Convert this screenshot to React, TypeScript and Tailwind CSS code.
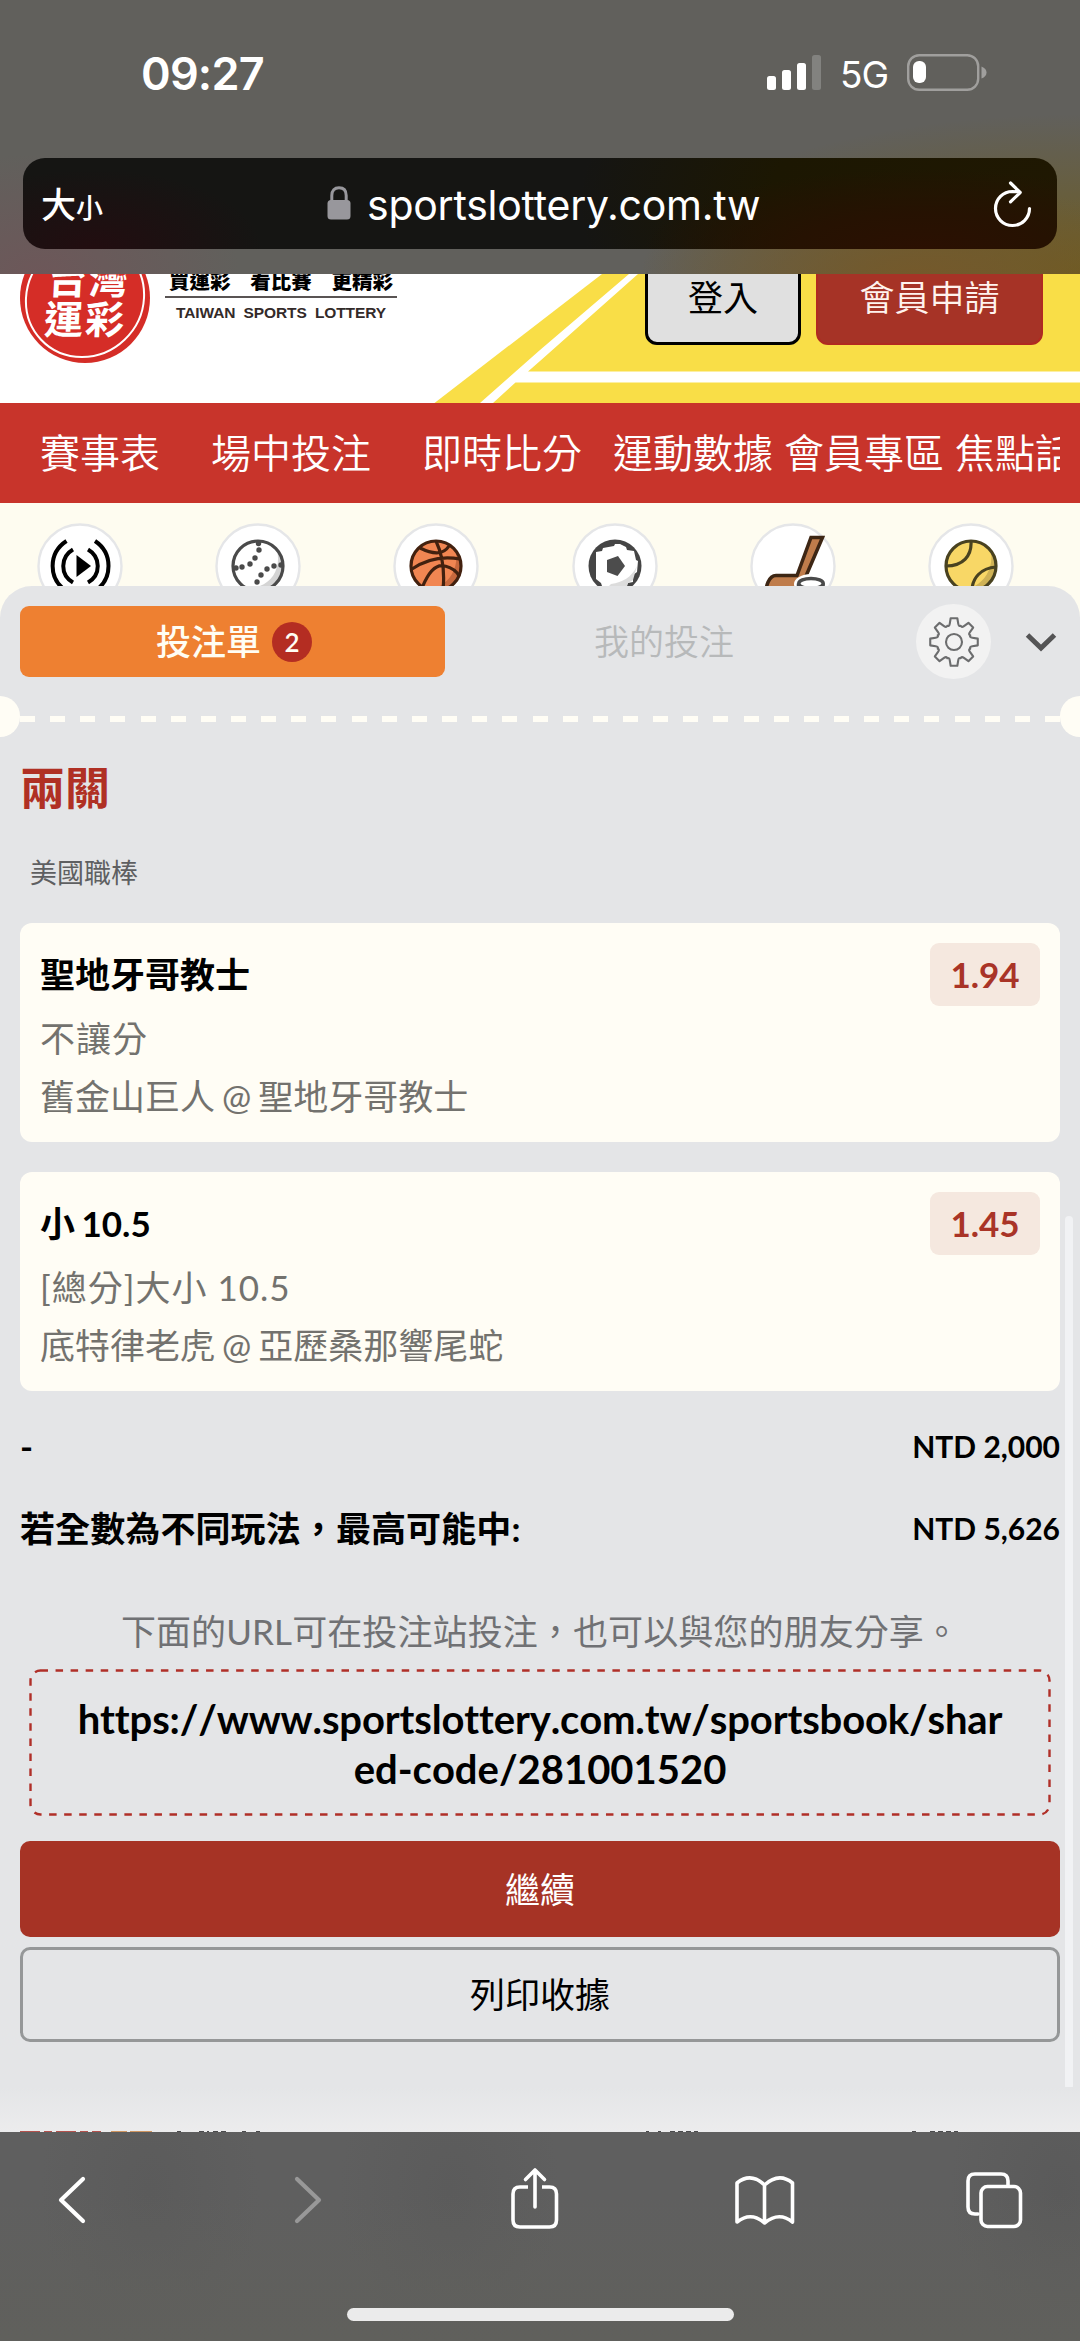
import React from 'react';

interface Bet {
  pick: string;
  odds: string;
  market: string;
  match: string;
}

const bets: Bet[] = [
  { pick: '聖地牙哥教士', odds: '1.94', market: '不讓分', match: '舊金山巨人 @ 聖地牙哥教士' },
  { pick: '小 10.5', odds: '1.45', market: '[總分]大小 10.5', match: '底特律老虎 @ 亞歷桑那響尾蛇' },
];

const StatusBar = () => (
  <div className="flex h-[158px] items-start pt-[40px] font-['Inter',sans-serif] text-white">
    <span className="ml-[141px] text-[45px] leading-[67px] font-semibold tracking-[-0.8px]">09:27</span>
    <svg className="mt-[15px] ml-auto" width="54" height="35" viewBox="0 0 54 35" fill="white">
      <rect x="0" y="21" width="9" height="14" rx="2.5" />
      <rect x="15" y="15" width="9" height="20" rx="2.5" />
      <rect x="30" y="8" width="9" height="27" rx="2.5" />
      <rect x="45" y="0" width="9" height="35" rx="2.5" fill="#82827f" />
    </svg>
    <span className="ml-[19px] w-[49px] text-[37px] leading-[70px] tracking-[-1px]">5G</span>
    <svg className="mt-[14px] mr-[93px] ml-[18px]" width="80" height="38" viewBox="0 0 80 38">
      <rect x="1.2" y="1.2" width="70" height="34.6" rx="11" fill="none" stroke="#a09f9d" strokeWidth="2.4" />
      <rect x="6" y="7" width="13" height="22" rx="6" fill="white" />
      <path d="M74.5 12.5q5 2 5 6t-5 6z" fill="#a09f9d" />
    </svg>
  </div>
);

const AddressBar = () => (
  <div className="mx-[23px] flex h-[91px] items-center rounded-[22px] bg-[#151513] bg-[radial-gradient(ellipse_280px_80px_at_900px_100%,#2b1002_0%,#261202_45%,transparent_100%),radial-gradient(ellipse_480px_220px_at_100%_50%,#201802_0%,#1c1702_60%,transparent_100%),radial-gradient(ellipse_170px_80px_at_70px_100%,#220d10_0%,transparent_100%)] pl-[18px] text-white">
    <span className="w-[283px] font-['Noto_Sans_CJK_TC',sans-serif] font-medium">
      <span className="text-[35px]">大</span>
      <span className="text-[27px]">小</span>
    </span>
    <svg width="24" height="34" viewBox="0 0 24 34" className="mb-[1px] ml-[3px]">
      <path d="M4.8 16V9.5C4.8 4.5 7.5 1.8 12 1.8S19.2 4.5 19.2 9.5V16" fill="none" stroke="#98979c" strokeWidth="3" />
      <rect x="0.5" y="14" width="23" height="19.5" rx="3.5" fill="#98979c" />
    </svg>
    <span className="mt-[2px] ml-[16px] font-['Inter',sans-serif] text-[41px] leading-[60px] tracking-[-0.25px]">sportslottery.com.tw</span>
    <svg className="mr-[25px] ml-auto" width="40" height="48" viewBox="0 0 40 48" fill="none" stroke="white" strokeWidth="3.2" strokeLinecap="round" strokeLinejoin="round">
      <path d="M37.5 28.5A17 17 0 1 1 20.5 11.5L27.5 11.8M18.5 3L28.2 12.5L18.5 21.8" />
    </svg>
  </div>
);

const SiteHeader = () => (
  <div className="relative h-[129px] overflow-hidden bg-white">
    <svg className="absolute inset-0" width="1080" height="129" viewBox="0 0 1080 129">
      <path d="M602 0H1080V129H434.5Z" fill="#f9de47" />
      <path d="M629 0H638L540 87L528 97.5H1080V108.5H515.5L493 129H480L540 76Z" fill="white" />
    </svg>
    <div className="relative flex">
      <div className="-mt-[41px] ml-[20px] h-[130px] w-[130px] shrink-0 rounded-full bg-[#d52d27] p-[5px]">
        <div className="flex h-full w-full -skew-x-3 flex-col items-center justify-center rounded-full border-2 border-white pb-[2px] font-['Noto_Sans_CJK_TC',sans-serif] text-[39px] leading-[40px] font-bold tracking-[2px] text-white">
          <span className="pl-[6px]">台灣</span>
          <span className="pl-[3px]">運彩</span>
        </div>
      </div>
      <div className="-mt-[9px] ml-[15px] w-[232px]">
        <div className="flex h-[33px] justify-between border-b-2 border-[#595453] px-[4px] font-['Noto_Sans_CJK_TC',sans-serif] text-[20.5px] leading-[30px] font-black text-black">
          <span>買運彩</span>
          <span>看比賽</span>
          <span>更精彩</span>
        </div>
        <div className="mt-[3px] text-center font-['Liberation_Sans',sans-serif] text-[15.5px] leading-[24px] font-bold tracking-[-0.1px] [word-spacing:4px] text-[#332a29]">
          TAIWAN SPORTS LOTTERY
        </div>
      </div>
      <div className="-mt-[24px] ml-auto flex gap-[15px] pr-[37px] text-[35px]">
        <div className="flex h-[95px] w-[156px] items-center justify-center rounded-[12px] border-[3px] border-black bg-[#e0e0e0] text-black">登入</div>
        <div className="flex h-[95px] w-[227px] items-center justify-center rounded-[12px] border-2 border-[#b02a21] bg-[#a63326] font-[350] text-[#fff3ee]">會員申請</div>
      </div>
    </div>
  </div>
);

const MainNav = () => (
  <nav className="h-[100px] bg-[#c8342b] pr-[20px] pl-[40px]">
    <div className="flex h-full items-center overflow-hidden pb-[4px] font-['Noto_Sans_CJK_TC',sans-serif] text-[40px] font-[350] whitespace-nowrap text-white">
      <span className="w-[171px] shrink-0">賽事表</span>
      <span className="w-[211px] shrink-0">場中投注</span>
      <span className="w-[191px] shrink-0">即時比分</span>
      <span className="w-[171px] shrink-0">運動數據</span>
      <span className="w-[171px] shrink-0">會員專區</span>
      <span>焦點話題</span>
    </div>
  </nav>
);

const LiveIcon = () => (
  <g fill="none" stroke="black" strokeWidth="4">
    <path d="M-3.5-11L11 0L-3.5 11Z" fill="black" stroke="none" />
    <path d="M-7-16.5C-20-9-20 9-7 16.5M8-16.5C21-9 21 9 8 16.5M-13.5-25C-32-13-32 13-13.5 25M15-25C33-13 33 13 15 25" />
  </g>
);

const stitches = [[0.5, -22.5], [1, -16], [-3, -8], [-8, -2], [-16, 1], [-22, 2], [23, -1], [16, 0], [9, 3], [3, 9], [-1, 16]];

const BaseballIcon = () => (
  <g>
    <circle r="25" fill="white" />
    <path d="M19-16C24 6 10 23-12 22A25 25 0 0 0 19-16Z" fill="#d4d4d4" />
    <circle r="25" fill="none" stroke="#4a4a4a" strokeWidth="3.2" />
    {stitches.map(([x, y]) => (
      <circle key={`${x},${y}`} cx={x} cy={y} r="2.7" fill="#4a4a4a" />
    ))}
  </g>
);

const BasketballIcon = () => (
  <g>
    <circle r="25" fill="#f18652" />
    <path d="M20-15C23 6 10 20-6 24A25 25 0 0 0 20-15Z" fill="#c7683d" />
    <g fill="none" stroke="#42210f" strokeWidth="3.2">
      <circle r="25" />
      <path d="M0-25C7-10 9 4 7 24M-16-18C-2-11 8-12 13-20M-24 3C-8-8 8-10 24-7M-14 22C-6 2 2-2 9 0C17 2 21 6 23 10" />
    </g>
  </g>
);

const SoccerIcon = () => (
  <g>
    <circle r="26.5" fill="#454545" />
    <path d="M-19-14L-13-15L-12-18L-1-20L0-22L5-22L11-19L12-16L19-15L21-6L23-5L22 6L18 9L18 16L13 17L10 23H-12L-14 17L-19 13Z" fill="white" />
    <path d="M22 0C16 12 8 16-4 18L-10 24H11L13 17L18 14Z" fill="#dcdcdc" />
    <path d="M3-10L10 0L2.5 10L-8 6V-6Z" fill="#4c4c4c" />
  </g>
);

const HockeyIcon = () => (
  <g>
    <path d="M18-28.5H29.5L10 17L-2 32H-27C-28 20-24 9.5-17 9.5H4Z" fill="#bf7c4b" stroke="#3d2614" strokeWidth="3.5" />
    <ellipse cx="18" cy="18" rx="17" ry="10" fill="white" />
    <path d="M5.5 17.5V28H30V17.5" fill="white" stroke="#4a4a4a" strokeWidth="3.5" />
    <ellipse cx="18" cy="17.5" rx="12.2" ry="5" fill="white" stroke="#4a4a4a" strokeWidth="3.5" />
  </g>
);

const TennisIcon = () => (
  <g>
    <circle r="25" fill="#f8d766" />
    <path d="M20-15C23 6 10 20-6 24A25 25 0 0 0 20-15Z" fill="#cfb256" />
    <g fill="none" stroke="#494220" strokeWidth="3.2">
      <circle r="25" />
      <path d="M0-25C1-10-8 0-25 0M25 1C10 2 1 12 1 25" />
    </g>
  </g>
);

const sports = [LiveIcon, BaseballIcon, BasketballIcon, SoccerIcon, HockeyIcon, TennisIcon];

const SportStrip = () => (
  <div className="flex h-[83px] justify-between overflow-hidden bg-[#fefcf0] pt-[20px] pr-[66px] pl-[37px]">
    {sports.map((Icon, i) => (
      <svg key={i} className="shrink-0" width="86" height="86" viewBox="-43 -43 86 86">
        <circle r="41.5" fill="white" stroke="#e5e6e8" strokeWidth="2.4" />
        <Icon />
      </svg>
    ))}
  </div>
);

const point = (r: number, deg: number) => {
  const a = (deg * Math.PI) / 180;
  return `${(r * Math.cos(a)).toFixed(2)} ${(r * Math.sin(a)).toFixed(2)}`;
};

// eight teeth, with a shallow dip between neighbours
const gearPath =
  Array.from({ length: 8 }, (_, i) => {
    const a = i * 45;
    return `${i ? 'L' : 'M'}${point(24, a - 8)}L${point(24, a + 8)}L${point(18.8, a + 13)}Q${point(16, a + 17)} ${point(17.6, a + 22.5)}Q${point(16, a + 28)} ${point(18.8, a + 32)}`;
  }).join('') + 'Z';

const SlipTabs = () => (
  <div className="mx-[20px] flex h-[71px] items-center">
    <div className="flex h-full w-[425px] shrink-0 items-center justify-center gap-[11px] rounded-[9px] bg-[#ee8031] pl-[3px] text-[35px] font-medium text-[#fffdf3]">
      投注單
      <span className="flex h-[40px] w-[40px] items-center justify-center rounded-full bg-[#b42d22] text-[26px] leading-none font-semibold">2</span>
    </div>
    <div className="w-[438px] shrink-0 pb-[2px] text-center font-['Noto_Sans_CJK_TC',sans-serif] text-[35px] font-[350] text-[#b7b9ba]">我的投注</div>
    <div className="ml-[33px] flex h-[75px] w-[75px] shrink-0 items-center justify-center rounded-full bg-[#f2f2f2]">
      <svg width="54" height="54" viewBox="-27 -27 54 54" fill="none" stroke="#6c6d6e" strokeWidth="2.1" strokeLinejoin="round">
        <path d={gearPath} />
        <circle r="8" />
      </svg>
    </div>
    <svg className="ml-[34px] shrink-0" width="32" height="20" viewBox="0 0 32 20" fill="none" stroke="#545455" strokeWidth="5">
      <path d="M2.5 3L16 16L29.5 3" />
    </svg>
  </div>
);

const TicketDivider = () => (
  <div className="mt-[19px] flex h-[41px] items-center justify-between">
    <div className="h-full w-[20px] rounded-r-full bg-[#fffdf5]" />
    <div className="mt-[5px] h-[6px] flex-1 bg-[repeating-linear-gradient(90deg,#fffdf5_0_15px,transparent_15px_30.150px)]" />
    <div className="h-full w-[20px] rounded-l-full bg-[#fffdf5]" />
  </div>
);

const BetCard = ({ bet }: { bet: Bet }) => (
  <div className="mx-[20px] mb-[30px] h-[219px] rounded-[12px] bg-[#fffdf5] p-[20px] text-[35px] text-[#73726e]">
    <div className="mb-[3px] flex h-[63px] items-center justify-between text-black">
      <span className="font-bold [word-spacing:-2px]">{bet.pick}</span>
      <span className="flex h-[63px] w-[110px] items-center justify-center rounded-[9px] bg-[#f5e8df] font-bold text-[#a93427]">{bet.odds}</span>
    </div>
    <div className="leading-[58px] tracking-[1px]">{bet.market}</div>
    <div className="leading-[58px] [word-spacing:-2px]">{bet.match}</div>
  </div>
);

const BetSlip = () => (
  <div className="bg-[#fefcf0]">
    <div className="relative h-[1546px] overflow-hidden rounded-t-[32px] bg-[#e4e5e7] pt-[20px]">
      <SlipTabs />
      <TicketDivider />
      <h2 className="mt-[24px] ml-[20px] text-[45px] leading-[55px] font-bold text-[#b03024]">兩關</h2>
      <div className="mt-[36px] mb-[30px] ml-[30px] text-[27px] leading-[41px] text-[#5e5f61]">美國職棒</div>
      {bets.map((bet) => (
        <BetCard key={bet.pick} bet={bet} />
      ))}
      <div className="mx-[20px] -mt-[5px] flex h-[60px] items-center justify-between font-bold text-black">
        <span className="text-[35px]">-</span>
        <span className="text-[30px]">NTD 2,000</span>
      </div>
      <div className="mx-[20px] mt-[22px] flex h-[60px] items-center justify-between font-bold text-black">
        <span className="text-[35px] tracking-[0.1px]">若全數為不同玩法，最高可能中:</span>
        <span className="text-[30px]">NTD 5,626</span>
      </div>
      <div className="mt-[46px] text-center text-[35px] leading-[54px] tracking-[0.1px] text-[#707174]">下面的URL可在投注站投注，也可以與您的朋友分享。</div>
      <div className="relative mx-[29px] mt-[11px] flex h-[147px] flex-col items-center justify-center pt-[2px] text-[40px] leading-[50px] font-bold [font-kerning:none] [font-variant-ligatures:none] text-black">
        <svg className="absolute inset-0" width="1022" height="147" viewBox="0 0 1022 147">
          <rect x="1.5" y="1.5" width="1019" height="144" rx="10" fill="none" stroke="#b02f28" strokeWidth="2.4" strokeDasharray="7.5 7.55" />
        </svg>
        <span className="tracking-[-0.15px]">https://www.sportslottery.com.tw/sportsbook/shar</span>
        <span>ed-code/281001520</span>
      </div>
      <button className="mx-[20px] mt-[25px] flex h-[96px] w-[1040px] items-center justify-center rounded-[10px] bg-[#a63325] text-[35px] text-white">繼續</button>
      <button className="mx-[20px] mt-[10px] flex h-[95px] w-[1040px] items-center justify-center rounded-[10px] border-[3px] border-[#959798] text-[35px] text-black">列印收據</button>
      <div className="absolute top-[630px] right-[7px] h-[874px] w-[8px] rounded-full bg-[#f1f2f4]" />
      <div className="absolute inset-x-0 bottom-0 h-[45px] bg-gradient-to-b from-[#e4e5e7] to-[#ececed]" />
      {/* tops of the results table that scrolls in below the slip */}
      <svg className="absolute bottom-0 left-0" width="1080" height="1" viewBox="0 0 1080 1" strokeWidth="2">
        <path d="M20 1h81" stroke="#b4524d" strokeDasharray="20 4 8 4" />
        <path d="M111 1h16m3 0h22" stroke="#cf9560" />
        <path d="M177 1h4m18 0h10m4 0h16m13 0h4m10 0h4M646 1h3m9 0h3m9 0h28M912 1h4m14 0h28" stroke="#4a4a4c" strokeDasharray="5 3" />
      </svg>
    </div>
  </div>
);

const BrowserToolbar = () => (
  <div className="flex h-[209px] flex-col items-center bg-[#5f5f5f] bg-[linear-gradient(180deg,transparent_30%,#60605c_100%),radial-gradient(ellipse_110px_170px_at_150px_60px,#5b5b5b,transparent),radial-gradient(ellipse_110px_170px_at_450px_60px,#5b5b5b,transparent),radial-gradient(ellipse_110px_170px_at_1060px_60px,#5a5a5a,transparent)]">
    <svg width="1080" height="110" viewBox="0 1 1080 110" fill="none" stroke="white" strokeWidth="3.6" strokeLinecap="round" strokeLinejoin="round">
      <path d="M83 48L61 69L83 90" strokeWidth="4.2" />
      <path d="M297 48L319 69L297 90" strokeWidth="4.2" stroke="#989898" />
      <path d="M528 56H520Q513 56 513 63V89Q513 96 520 96H549.5Q556.5 96 556.5 89V63Q556.5 56 549.5 56H542" strokeLinecap="butt" />
      <path d="M535 76V39M525.5 48.5L535 39L544.5 48.5" />
      <path d="M764.5 54Q751 41 737 52V91Q751 80 764.5 92Q779 80 792.5 91V52Q779 41 764.5 54V92" />
      <path d="M978 83H975Q968 83 968 76V50Q968 43 975 43H1001Q1008 43 1008 50V55" />
      <rect x="981" y="55.5" width="39.5" height="40" rx="6.5" />
    </svg>
    <div className="mt-[66px] h-[13px] w-[387px] rounded-full bg-[#ebebeb]" />
  </div>
);

const App: React.FC = () => {
  return (
    <div lang="zh-Hant" className="h-[2341px] w-[1080px] overflow-hidden font-['Lato','Noto_Sans_CJK_TC',sans-serif]">
      <div className="h-[274px] bg-[#61605c] bg-[radial-gradient(ellipse_280px_90px_at_920px_100%,#74592b_0%,transparent_100%),radial-gradient(ellipse_440px_160px_at_100%_100%,#6d5c20_0%,transparent_100%),radial-gradient(ellipse_200px_120px_at_40px_100%,#6d5759_0%,transparent_100%)]">
        <StatusBar />
        <AddressBar />
      </div>
      <SiteHeader />
      <MainNav />
      <SportStrip />
      <BetSlip />
      <BrowserToolbar />
    </div>
  );
};

export default App;
